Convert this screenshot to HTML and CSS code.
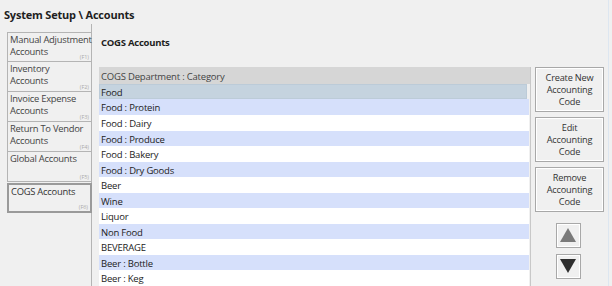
FILE: index.html
```html
<!DOCTYPE html>
<html lang="en">
<head>
    <meta charset="UTF-8">
    <title>System Setup - Accounts</title>
    <link rel="stylesheet" href="styles.css">
</head>
<body>
    <div class="window">
        <div class="title">System Setup \ Accounts</div>
        <div class="content">
            <div class="sidebar">
                <div class="tab"><span class="tab-label">Manual Adjustment<br>Accounts</span><span class="key">(F1)</span></div>
                <div class="tab"><span class="tab-label">Inventory<br>Accounts</span><span class="key">(F2)</span></div>
                <div class="tab"><span class="tab-label">Invoice Expense<br>Accounts</span><span class="key">(F3)</span></div>
                <div class="tab"><span class="tab-label">Return To Vendor<br>Accounts</span><span class="key">(F4)</span></div>
                <div class="tab"><span class="tab-label">Global Accounts</span><span class="key">(F5)</span></div>
                <div class="tab active"><span class="tab-label">COGS Accounts</span><span class="key">(F6)</span></div>
            </div>
            <div class="main">
                <h2>COGS Accounts</h2>
                <div class="panel">
                    <div class="list">
                        <div class="list-head">COGS Department : Category</div>
                        <div class="row selected">Food</div>
                        <div class="row alt">Food : Protein</div>
                        <div class="row">Food : Dairy</div>
                        <div class="row alt">Food : Produce</div>
                        <div class="row">Food : Bakery</div>
                        <div class="row alt">Food : Dry Goods</div>
                        <div class="row">Beer</div>
                        <div class="row alt">Wine</div>
                        <div class="row">Liquor</div>
                        <div class="row alt">Non Food</div>
                        <div class="row">BEVERAGE</div>
                        <div class="row alt">Beer : Bottle</div>
                        <div class="row">Beer : Keg</div>
                    </div>
                    <div class="actions">
                        <button class="btn">Create New Accounting Code</button>
                        <button class="btn">Edit Accounting Code</button>
                        <button class="btn">Remove Accounting Code</button>
                        <button class="arrow up"><svg width="16" height="14" viewBox="0 0 16 14"><polygon points="8,0 16,14 0,14" fill="#7a7a7a"/></svg></button>
                        <button class="arrow down"><svg width="16" height="14" viewBox="0 0 16 14"><polygon points="0,0 16,0 8,14" fill="#2e2e2e"/></svg></button>
                    </div>
                </div>
            </div>
        </div>
    </div>
</body>
</html>
```

FILE: styles.css
```css
html, body {
    margin: 0;
    height: 100%;
    overflow: hidden;
}
body {
    background: #f0f0f0;
    font-family: "Open Sans", "Noto Sans", sans-serif;
    color: #222;
}
.window {
    width: 608px;
    height: 286px;
    border-right: 1px solid #dde6f0;
    display: flex;
    flex-direction: column;
}
.title {
    font-size: 11px;
    font-weight: bold;
    letter-spacing: -0.2px;
    padding: 7px 4px 0 4px;
    height: 25px;
    box-sizing: border-box;
    color: #1e1e1e;
}
.content {
    display: flex;
    flex: 1;
}
.sidebar {
    width: 92px;
    box-sizing: border-box;
    padding: 8px 0 0 7px;
    border-right: 1px solid #b4b4b4;
}
.tab {
    position: relative;
    height: 30px;
    box-sizing: border-box;
    border: 1px solid #b4b4b4;
    border-right: none;
    background: #f0f0f0;
    font-size: 9.4px;
    line-height: 12px;
    color: #444;
    padding: 1px 0 0 2px;
    letter-spacing: -0.25px;
    white-space: nowrap;
}
.tab + .tab {
    border-top: none;
}
.tab.active {
    margin-top: 1px;
    border: 2px solid #9a9a9a;
    margin-right: -1px;
    color: #333;
}
.tab-label {
    display: block;
}
.key {
    position: absolute;
    right: 2px;
    bottom: 0;
    font-size: 5.5px;
    line-height: 8px;
    letter-spacing: 0;
    color: #aaa;
}
.main {
    flex: 1;
    display: flex;
    flex-direction: column;
    padding-left: 7px;
}
h2 {
    font-size: 9.5px;
    font-weight: bold;
    margin: 12px 0 0 2px;
    height: 31px;
    letter-spacing: -0.25px;
    color: #1e1e1e;
}
.panel {
    display: flex;
    flex: 1;
}
.list {
    width: 431px;
    border-right: 1px solid #c8c8c8;
    font-size: 9.5px;
    letter-spacing: -0.2px;
}
.list-head {
    background: #d6d6d6;
    color: #444;
    height: 17px;
    line-height: 20px;
    padding-left: 2px;
}
.row {
    height: 15.56px;
    line-height: 17px;
    padding-left: 2px;
    background: #fff;
    margin-right: 1px;
}
.row.alt {
    background: #d6e0fb;
}
.row.selected {
    background: #c5d3df;
    box-shadow: inset 0 0 0 1px #bccbd8;
    margin-right: 3px;
}
.actions {
    flex: 1;
    display: flex;
    flex-direction: column;
    align-items: center;
}
.btn {
    width: 69px;
    height: 45px;
    margin-bottom: 5px;
    padding: 1px 4px 0 4px;
    background: #f0f0f0;
    border: 1px solid #a8a8a8;
    box-shadow: inset 0 0 0 1px #fff;
    font-family: "Open Sans", "Noto Sans", sans-serif;
    font-size: 9.2px;
    line-height: 12px;
    color: #333;
    letter-spacing: -0.2px;
}
.arrow {
    width: 25px;
    height: 25px;
    margin-top: 6px;
    margin-right: 3px;
    padding: 0;
    background: #f0f0f0;
    border: 1px solid #a8a8a8;
    box-shadow: inset 0 0 0 1px #fff;
    display: flex;
    align-items: center;
    justify-content: center;
}
```
